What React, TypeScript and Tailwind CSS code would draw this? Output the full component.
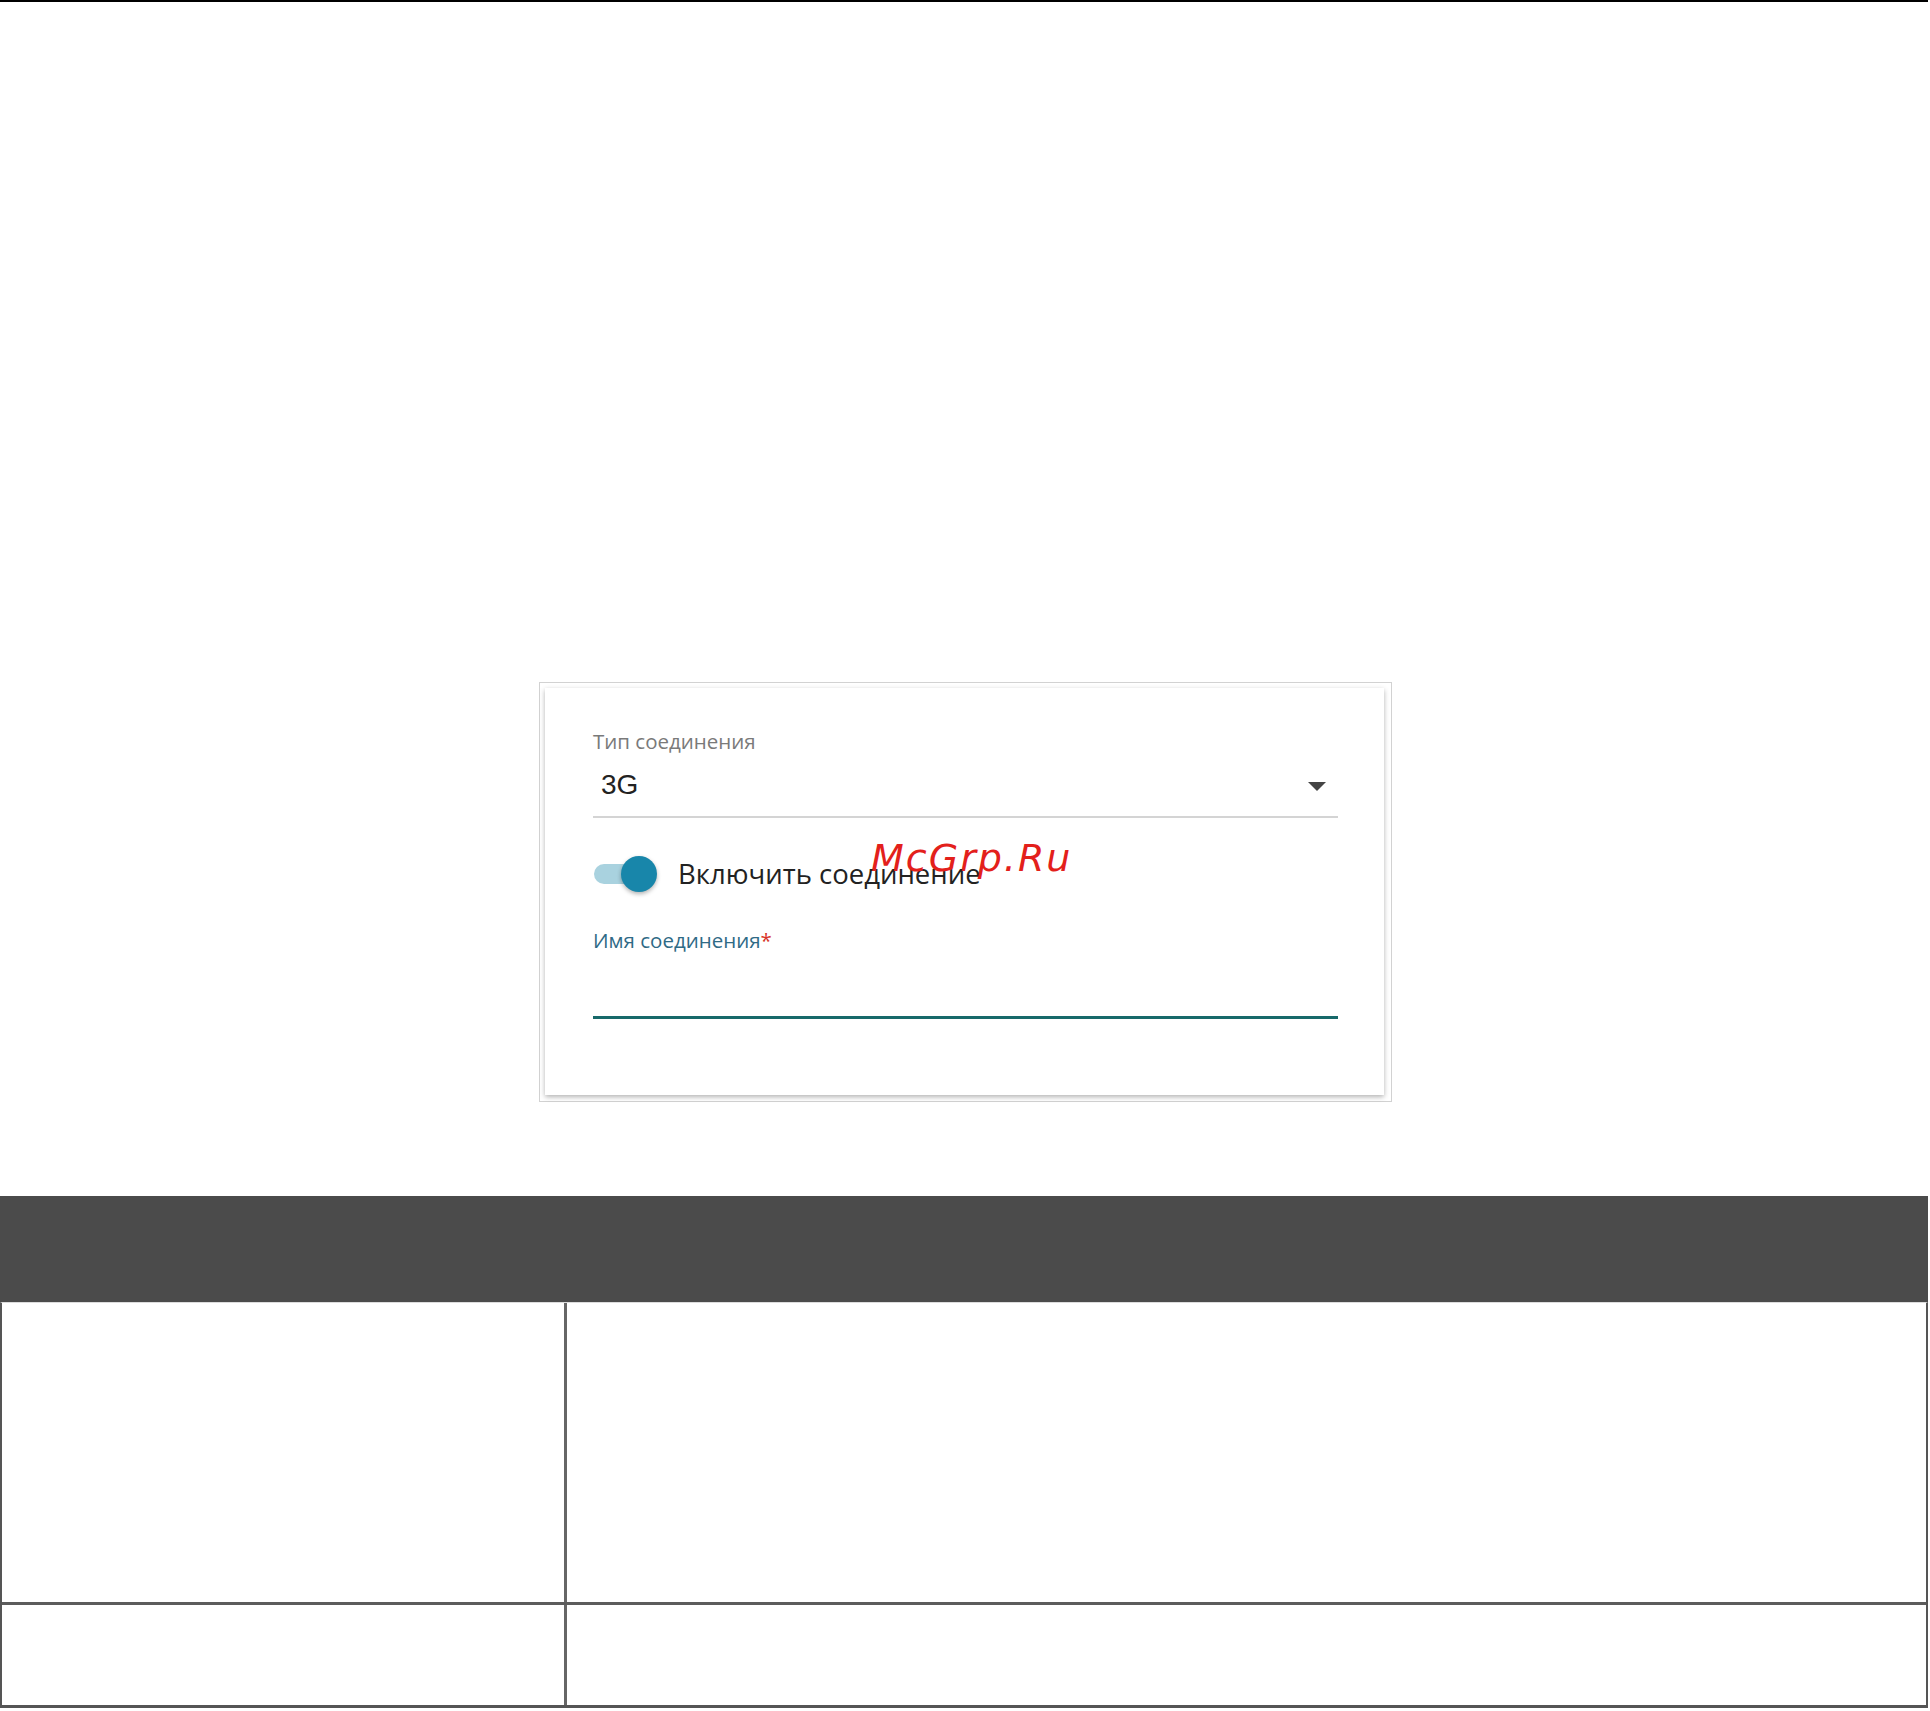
export default function App() {
  return (
    <div className="w-[1930px] h-[1711px] bg-white overflow-hidden" style={{ fontFamily: '"Open Sans", sans-serif' }}>
      <div className="h-[2px] w-[1928px] bg-black" />

      {/* settings card */}
      <div className="mt-[680px] ml-[539px] w-[853px] h-[420px] border border-[#d2d2d2] pl-[5px] pt-[5px]">
        <div className="w-[839px] h-[407px] bg-white shadow-[0_2px_5px_rgba(0,0,0,0.3)] pl-[48px] pr-[46px] pt-[39px]">
          <div className="text-[20.5px] leading-[28px] text-[#7a7a7a]">Тип соединения</div>

          <div className="mt-[12px] flex items-center justify-between pr-[12px]">
            <span
              className="text-[28px] leading-[36px] text-[#222] pl-[8px]"
              style={{ fontFamily: '"Liberation Sans", Arial, sans-serif' }}
            >
              3G
            </span>
            <svg width="18" height="9" viewBox="0 0 18 9" className="mt-[3px]">
              <path d="M0 0 H18 L9 9 Z" fill="#444" />
            </svg>
          </div>
          <div className="mt-[13px] h-[2px] bg-[#d4d4d4]" />

          <div className="mt-[36px] h-[40px] flex items-center relative">
            <div className="relative w-[64px] h-[36px] flex items-center">
              <div className="w-[56px] h-[20px] rounded-full bg-[#a9d2df] ml-[1px]" />
              <div className="absolute right-0 top-0 w-[36px] h-[36px] rounded-full bg-[#1886aa] shadow-[0_2px_4px_rgba(0,0,0,0.3)]" />
            </div>
            <span className="ml-[21px] text-[27.5px] leading-[40px] text-[#222]">Включить соединение</span>
            <span
              className="absolute left-[278px] top-[-19px] text-[38px] leading-[46px] italic tracking-[2px] text-[#e3201b]"
              style={{ fontFamily: '"DejaVu Sans", sans-serif' }}
            >
              McGrp.Ru
            </span>
          </div>

          <div className="mt-[32px] text-[20.5px] leading-[28px] text-[#2f6a86]">
            Имя соединения<span className="text-[#d8352a]">*</span>
          </div>
          <div className="mt-[62px] h-[3px] bg-[#17696a]" />
        </div>
      </div>

      {/* table */}
      <div className="mt-[94px] w-[1928px]">
        <div className="h-[106px] bg-[#4b4b4b]" />
        <div className="border-t border-[#dcdcdc] border-l-2 border-l-[#555] border-r-2 border-r-[#555] border-b-[3px] border-b-[#555]">
          <div className="h-[302px] flex border-b-[3px] border-[#5c5c5c]">
            <div className="w-[565px] border-r-[3px] border-[#666]" />
            <div className="flex-1" />
          </div>
          <div className="h-[100px] flex">
            <div className="w-[565px] border-r-[3px] border-[#666]" />
            <div className="flex-1" />
          </div>
        </div>
      </div>
    </div>
  )
}
